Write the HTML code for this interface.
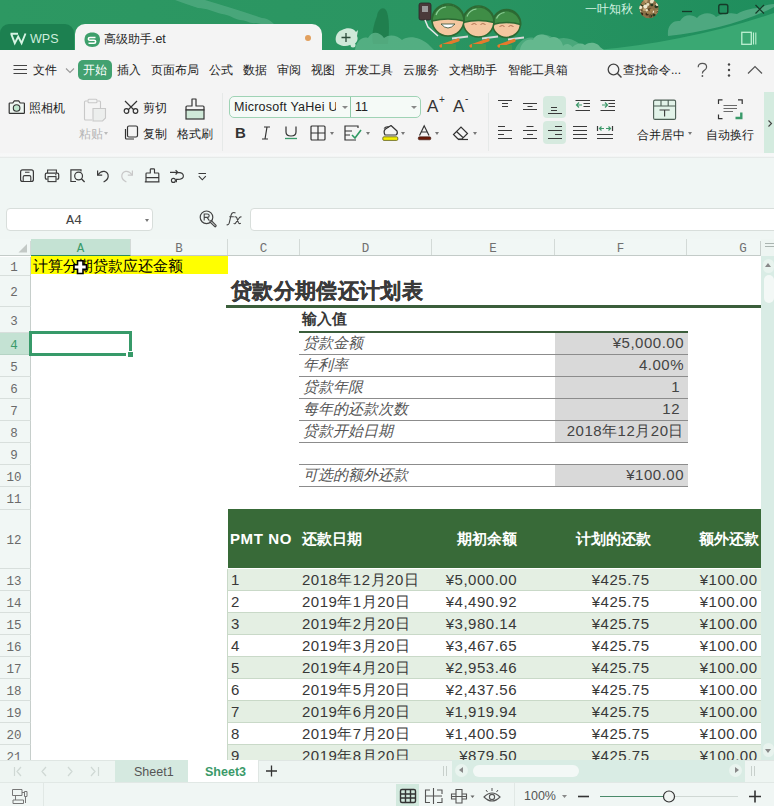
<!DOCTYPE html><html><head><meta charset="utf-8"><style>
*{box-sizing:border-box;margin:0;padding:0}
html,body{width:774px;height:806px;overflow:hidden;background:#fff}
body{position:relative;font-family:"Liberation Sans",sans-serif;color:#333;font-size:13px}
.a{position:absolute;white-space:nowrap}
svg{position:absolute;overflow:visible}
#title{left:0;top:0;width:774px;height:50px;background:#2d9460;overflow:hidden}
#menu{left:0;top:50px;width:774px;height:40px;background:#f4f4f4}
#ribbon{left:0;top:90px;width:774px;height:66px;background:#f4f4f4}
#qat{left:0;top:158px;width:774px;height:81px;background:#f0f6f4}
#colhdr{left:0;top:239px;width:761px;height:17px;background:#f1f7f5}
#grid{left:0;top:256px;width:761px;height:504px;background:#fff;overflow:hidden}
#vscroll{left:761px;top:239px;width:13px;height:521px;background:#d9ece5}
#tabs{left:0;top:760px;width:774px;height:22px;background:#eef5f2}
#status{left:0;top:782px;width:774px;height:24px;background:#f0f6f4}
.rh{position:absolute;left:0;width:31px;padding-right:2px;background:#f1f7f5;border-bottom:1px solid #d8dfdc;border-right:1px solid #c6cecb;font-family:"Liberation Mono",monospace;font-size:12.5px;color:#6a6a6a;text-align:center}
.ch{position:absolute;top:0;height:16px;border-right:1px solid #d3dad7;font-family:"Liberation Mono",monospace;font-size:12.5px;color:#707070;text-align:center;line-height:21px}
.t{position:absolute;white-space:nowrap;font-size:15px;color:#383838;line-height:22px;letter-spacing:0.5px}
.r{text-align:right}
</style></head><body>
<div id="title" class="a">
<svg width="774" height="50" style="left:0;top:0">
<defs><linearGradient id="tg" x1="0" x2="1" y1="0" y2="0"><stop offset="0" stop-color="#2d9862"/><stop offset="0.55" stop-color="#2a9562"/><stop offset="1" stop-color="#1f8e5d"/></linearGradient></defs><rect width="774" height="50" fill="url(#tg)"/>
<path d="M175 0 H205 C225 6 245 12 262 18 C268 18 272 22 276 26 C268 27 262 24 256 23 C250 24 246 20 240 20 C234 19 230 15 222 14 C214 12 206 8 198 8 C190 5 182 3 175 0 Z" fill="#56ad84" opacity="0.7"/>
<path d="M596 50 C655 45 715 33 774 13 V50 Z" fill="#3aa873"/>
<path d="M668 36 C667 26 672 20 680 21 C684 14 692 14 697 18 C702 12 712 12 716 17 C724 12 732 13 737 14 C745 9 755 8 760 8 C765 5 770 4 774 4 V7 C745 22 705 32 668 36 Z" fill="#5aae88" opacity="0.8"/>
<path d="M520 50 C521 43 527 38 533 40 C536 33 545 33 550 38 C556 35 562 40 563 46 C566 42 572 44 574 50 Z M570 50 C574 44 580 42 585 45 C590 41 598 43 600 47 L604 50 Z" fill="#74bf99" opacity="0.85"/>
</svg>
<div class="a" style="left:0px;top:24px;width:74px;height:26px;background:#1c8050;border-radius:9px 9px 0 0"></div>
<svg width="774" height="50" style="left:0;top:0"><path d="M10.5 33.8 H18 M11.2 33.8 L14.8 43.2 L18.2 36.5 L21.6 43.2 L25.5 33.5" stroke="#d6f4e4" stroke-width="1.9" fill="none" stroke-linejoin="miter"/></svg>
<div class="a" style="left:30px;top:31px;font-size:12.5px;color:#cdeedd;line-height:16px">WPS</div>
<div class="a" style="left:75px;top:24px;width:247px;height:26px;background:#f4f4f4;border-radius:10px 10px 0 0"></div>
<svg width="17" height="16" style="left:84px;top:31.5px"><path d="M8.2 0.5 C13 0.5 16 3 16 7.5 C16 12 13.5 15 8.2 15 C3 15 0.5 12 0.5 7.5 C0.5 3 3.5 0.5 8.2 0.5 Z" fill="#3d9f6b"/><path d="M11.5 5.5 H6 Q4.3 5.5 4.3 7 Q4.3 8.3 6 8.3 H10 Q11.7 8.3 11.7 9.8 Q11.7 11.3 10 11.3 H4.5" stroke="#fff" stroke-width="1.5" fill="none"/></svg>
<div class="a" style="left:104px;top:31px;font-size:12.4px;color:#2a2a2a;line-height:16px">高级助手.et</div>
<div class="a" style="left:305px;top:35px;width:6px;height:6px;border-radius:3px;background:#e2a05e"></div>
<svg width="26" height="22" style="left:334px;top:26px"><path d="M4 18 C0 16 1 6 8 4 C13 1 20 2 22 6 L24 4 L23 10 C25 14 22 19 16 19 C12 21 7 20 4 18Z" fill="#cfe9d9"/><circle cx="19" cy="19" r="2.5" fill="#cfe9d9"/><path d="M12 7 V16 M7.5 11.5 H16.5" stroke="#2c4a3a" stroke-width="1.3"/></svg>
<svg width="774" height="50" style="left:0;top:0"><path d="M373 44 C371 34 374 24 377 16 C378 9 384 5 387 12 C390 22 389 34 388 44 Z" fill="#1f7b4b" opacity="0.85"/><path d="M355 50 C356 42 362 36 368 38 C372 30 380 32 384 38 C390 33 398 36 402 40 C408 35 420 37 428 44 L434 50 Z" fill="#62b78d" opacity="0.75"/><path d="M515 50 C518 42 526 36 534 38 C540 32 550 34 556 40 C562 36 572 38 580 44 L584 50 Z" fill="#62b78d" opacity="0.6"/><rect x="419" y="3" width="12" height="17" rx="2" fill="#4a3a3a" stroke="#2a2a2a" stroke-width="0.8"/><rect x="422" y="6" width="6" height="6" fill="#9a9a9a"/><path d="M425 20 L428 27 L438 36" stroke="#e8e8e8" stroke-width="1.5" fill="none"/><circle cx="506.5" cy="23.5" r="14" fill="#f4c7a0" stroke="#2c6a33" stroke-width="1.6"/><path d="M492.5 24.5 A14 14 0 0 1 520.5 24.5 Q506.5 20.5 492.5 24.5 Z" fill="#3f8d46" stroke="#2c6a33" stroke-width="1.6"/><path d="M496.5 18.5 A10 10 0 0 1 504.5 12.5" stroke="#8fd09a" stroke-width="1.2" fill="none"/><path d="M499.5 26.5 Q502.5 24.5 504.5 26.5 M508.5 26.5 Q510.5 24.5 513.5 26.5" stroke="#b07050" stroke-width="1" fill="none"/><circle cx="478.5" cy="21.5" r="15.5" fill="#f4c7a0" stroke="#2c6a33" stroke-width="1.6"/><path d="M463 22.5 A15.5 15.5 0 0 1 494 22.5 Q478.5 18.5 463 22.5 Z" fill="#3f8d46" stroke="#2c6a33" stroke-width="1.6"/><path d="M467 16.5 A11.5 11.5 0 0 1 476.5 9" stroke="#8fd09a" stroke-width="1.2" fill="none"/><path d="M471.5 24.5 Q474.5 22.5 476.5 24.5 M480.5 24.5 Q482.5 22.5 485.5 24.5" stroke="#b07050" stroke-width="1" fill="none"/><circle cx="448" cy="20" r="16" fill="#f4c7a0" stroke="#2c6a33" stroke-width="1.6"/><path d="M432 21 A16 16 0 0 1 464 21 Q448 17 432 21 Z" fill="#3f8d46" stroke="#2c6a33" stroke-width="1.6"/><path d="M436 15 A12 12 0 0 1 446 7" stroke="#8fd09a" stroke-width="1.2" fill="none"/><path d="M441 24 Q448 32 455 24 Z" fill="#fff" stroke="#2c4a30" stroke-width="0.8"/><path d="M452 38.5 L468 36.5 M482 38.5 L498 36.5 M508 39.5 L524 37.5" stroke="#d8d8d8" stroke-width="1.8"/><path d="M441 46 L458 40 M471 46 L488 40 M499 46 L514 40.5" stroke="#e57a2c" stroke-width="3.2" stroke-linecap="round"/><path d="M442 50 V44 H456 V50 Z M472 50 V44 H486 V50 Z M500 50 V45 H512 V50 Z" fill="#3e9a52"/></svg>
<div class="a" style="left:585px;top:1px;font-size:12px;color:#d2f2e1;line-height:16px">一叶知秋</div>
<svg width="774" height="50" style="left:0;top:0"><defs><clipPath id="av"><circle cx="649" cy="8.6" r="9.6"/></clipPath></defs><g clip-path="url(#av)"><rect x="638" y="-2" width="22" height="22" fill="#8a7048"/><circle cx="644.3" cy="9.5" r="1.5" fill="#c0a070"/><circle cx="651.3" cy="1.1" r="1.0" fill="#c0a070"/><circle cx="644.7" cy="4.1" r="2.4" fill="#c0a070"/><circle cx="649.7" cy="9.6" r="1.6" fill="#3a2a18"/><circle cx="644.2" cy="2.7" r="2.3" fill="#2a3a20"/><circle cx="653.3" cy="11.7" r="1.1" fill="#f0ead0"/><circle cx="645.4" cy="0.5" r="2.2" fill="#c0a070"/><circle cx="650.7" cy="16.1" r="1.5" fill="#2a3a20"/><circle cx="647.1" cy="14.0" r="1.6" fill="#3a2a18"/><circle cx="642.4" cy="3.8" r="2.4" fill="#2a3a20"/><circle cx="654.0" cy="15.0" r="1.6" fill="#2a3a20"/><circle cx="650.3" cy="9.3" r="1.6" fill="#6a5030"/><circle cx="656.3" cy="11.9" r="2.3" fill="#a08050"/><circle cx="657.8" cy="11.7" r="1.2" fill="#e8e0c0"/><circle cx="650.2" cy="12.5" r="1.3" fill="#a08050"/><circle cx="645.1" cy="1.1" r="2.2" fill="#c0a070"/><circle cx="641.6" cy="14.0" r="1.6" fill="#3a2a18"/><circle cx="640.4" cy="7.5" r="1.6" fill="#d8c8a0"/><circle cx="640.8" cy="10.8" r="1.1" fill="#e8e0c0"/><circle cx="649.9" cy="16.1" r="1.4" fill="#6a5030"/><circle cx="641.4" cy="10.5" r="1.0" fill="#6a5030"/><circle cx="657.5" cy="5.1" r="1.4" fill="#f0ead0"/><circle cx="657.6" cy="5.9" r="1.5" fill="#3a2a18"/><circle cx="656.1" cy="6.6" r="1.6" fill="#2a3a20"/><circle cx="651.6" cy="10.4" r="1.8" fill="#a08050"/><circle cx="647.8" cy="12.6" r="1.3" fill="#a08050"/><circle cx="647.9" cy="4.5" r="1.4" fill="#e8e0c0"/><circle cx="640.2" cy="7.3" r="1.8" fill="#f0ead0"/><circle cx="646.8" cy="10.3" r="1.2" fill="#e8e0c0"/><circle cx="648.4" cy="11.9" r="1.5" fill="#a08050"/><circle cx="653.3" cy="0.4" r="1.1" fill="#f0ead0"/><circle cx="657.3" cy="4.4" r="1.6" fill="#e8e0c0"/><circle cx="643.2" cy="3.2" r="2.1" fill="#a08050"/><circle cx="645.4" cy="6.6" r="2.1" fill="#f0ead0"/><circle cx="657.5" cy="12.0" r="1.2" fill="#6a5030"/><circle cx="651.8" cy="4.7" r="1.5" fill="#2a3a20"/><circle cx="651.7" cy="1.7" r="1.8" fill="#e8e0c0"/></g></svg>
<svg width="90" height="20" style="left:680px;top:0">
<path d="M2 11.5 H12" stroke="#163a28" stroke-width="1.3"/>
<rect x="38.8" y="4.5" width="9" height="9" rx="1.8" stroke="#163a28" stroke-width="1.4" fill="none"/>
<path d="M75.5 5 L84 13.5 M84 5 L75.5 13.5" stroke="#163a28" stroke-width="1.2"/>
</svg>
<svg width="20" height="18" style="left:740px;top:30px"><rect x="1.8" y="2.3" width="9.5" height="12" stroke="#bdf0d2" stroke-width="1.3" fill="none"/><path d="M13.5 2.5 V14.5 M15.8 2.5 V14.5" stroke="#bdf0d2" stroke-width="1.1"/></svg>
</div>
<div id="menu" class="a"></div>
<svg width="18" height="12" style="left:12px;top:64px"><path d="M1.5 1.5 H15 M1.5 5.5 H15 M1.5 9.5 H15" stroke="#444" stroke-width="1.1"/></svg>
<div class="a" style="left:33px;top:62px;font-size:12px;color:#222;line-height:16px">文件</div>
<div class="a" style="left:117px;top:62px;font-size:12px;color:#222;line-height:16px">插入</div>
<div class="a" style="left:151px;top:62px;font-size:12px;color:#222;line-height:16px">页面布局</div>
<div class="a" style="left:209px;top:62px;font-size:12px;color:#222;line-height:16px">公式</div>
<div class="a" style="left:243px;top:62px;font-size:12px;color:#222;line-height:16px">数据</div>
<div class="a" style="left:277px;top:62px;font-size:12px;color:#222;line-height:16px">审阅</div>
<div class="a" style="left:311px;top:62px;font-size:12px;color:#222;line-height:16px">视图</div>
<div class="a" style="left:345px;top:62px;font-size:12px;color:#222;line-height:16px">开发工具</div>
<div class="a" style="left:403px;top:62px;font-size:12px;color:#222;line-height:16px">云服务</div>
<div class="a" style="left:449px;top:62px;font-size:12px;color:#222;line-height:16px">文档助手</div>
<div class="a" style="left:508px;top:62px;font-size:12px;color:#222;line-height:16px">智能工具箱</div>
<div class="a" style="left:623px;top:62px;font-size:12px;color:#222;line-height:16px">查找命令...</div>
<svg width="12" height="8" style="left:64.5px;top:67.5px"><path d="M1 0.5 L5 4.5 L9 0.5" stroke="#999" stroke-width="1.1" fill="none"/></svg>
<div class="a" style="left:78px;top:60px;width:34px;height:20px;background:#42a170;border-radius:5px"></div>
<div class="a" style="left:83px;top:62px;font-size:12px;color:#fff;line-height:16px">开始</div>
<svg width="18" height="18" style="left:606.5px;top:62.5px"><circle cx="6.5" cy="6.5" r="5.3" stroke="#444" stroke-width="1.3" fill="none"/><path d="M10.3 10.3 L14.5 14.5" stroke="#444" stroke-width="1.5"/></svg>
<svg width="774" height="90" style="left:0;top:0"><path d="M698.2 67.3 Q698.2 63.4 702.4 63.4 Q706.6 63.4 706.6 67.1 Q706.6 69.4 704 70.6 Q702.4 71.4 702.4 73.4" stroke="#555" stroke-width="1.2" fill="none"/><circle cx="702.4" cy="76" r="0.9" fill="#555"/></svg>
<svg width="6" height="16" style="left:726px;top:62px"><circle cx="3" cy="2.5" r="1.2" fill="#444"/><circle cx="3" cy="8" r="1.2" fill="#444"/><circle cx="3" cy="13.5" r="1.2" fill="#444"/></svg>
<svg width="18" height="10" style="left:746.5px;top:65px"><path d="M1 8.5 L8 1.5 L15 8.5" stroke="#555" stroke-width="1.2" fill="none"/></svg>
<div id="ribbon" class="a"></div>
<svg width="774" height="160" style="left:0;top:0"><path d="M9.2 103.6 Q9.2 103 9.8 103 H12.8 L14.3 100.9 H18.7 L20.2 103 H23.8 Q24.4 103 24.4 103.6 V112.8 Q24.4 113.4 23.8 113.4 H9.8 Q9.2 113.4 9.2 112.8 Z" stroke="#333" stroke-width="1.2" fill="#eef6f1" stroke-linejoin="round"/><circle cx="16.6" cy="108" r="3.3" stroke="#333" stroke-width="1.1" fill="#bfe6cf"/></svg>
<div class="a" style="left:29px;top:101px;font-size:12px;color:#222;line-height:14px">照相机</div>
<svg width="774" height="160" style="left:0;top:0"><path d="M87.5 101 H85.5 Q84.5 101 84.5 102 V119 Q84.5 120 85.5 120 H92" stroke="#c8c8c8" stroke-width="1.1" fill="none"/><path d="M97.5 101 H99.5 Q100.5 101 100.5 102 V108" stroke="#c8c8c8" stroke-width="1.1" fill="none"/><rect x="88" y="99.2" width="9" height="3.5" rx="1" stroke="#c8c8c8" stroke-width="1.1" fill="#f3f4f4"/><path d="M93 108.5 H105.5 V118 L102.5 121 H93 Z" stroke="#c8c8c8" stroke-width="1.1" fill="#eceeed"/></svg>
<div class="a" style="left:79px;top:127px;font-size:12px;color:#b5b5b5;line-height:14px">粘贴</div>
<div class="a" style="left:104px;top:132px;border-left:2.5px solid transparent;border-right:2.5px solid transparent;border-top:3px solid #bbb"></div>
<svg width="16" height="14" style="left:123px;top:100px"><path d="M2 1 L11 10 M14 1 L5 10" stroke="#333" stroke-width="1.2"/><circle cx="3.5" cy="11" r="2.3" stroke="#333" stroke-width="1.2" fill="none"/><circle cx="12.5" cy="11" r="2.3" stroke="#333" stroke-width="1.2" fill="none"/></svg>
<div class="a" style="left:143px;top:101px;font-size:12px;color:#222;line-height:14px">剪切</div>
<svg width="16" height="15" style="left:123px;top:125px"><rect x="4.5" y="1" width="10" height="11" rx="1.5" stroke="#333" stroke-width="1.2" fill="none"/><path d="M2.5 4 V13 Q2.5 14 3.5 14 H11" stroke="#333" stroke-width="1.2" fill="none"/></svg>
<div class="a" style="left:143px;top:127px;font-size:12px;color:#222;line-height:14px">复制</div>
<svg width="24" height="24" style="left:183px;top:97px"><path d="M9 2 H13 V9 H20 Q21 9 21 10 V13 H3 V10 Q3 9 4 9 H9 Z" stroke="#333" stroke-width="1.2" fill="none" stroke-linejoin="round"/><rect x="3" y="13" width="18" height="9" fill="#cfe9d8" stroke="#333" stroke-width="1.2"/></svg>
<div class="a" style="left:177px;top:127px;font-size:12px;color:#222;line-height:14px">格式刷</div>
<div class="a" style="left:222px;top:93px;width:1px;height:58px;background:#e6e9e8"></div>
<div class="a" style="left:229px;top:96px;width:192px;height:22px;border:1px solid #9fd3b5;border-radius:5px;background:#f5faf7"></div>
<div class="a" style="left:350px;top:97px;width:1px;height:20px;background:#8fc9a8"></div>
<div class="a" style="left:234px;top:100px;font-size:12.5px;color:#222;line-height:14px;letter-spacing:0.25px">Microsoft YaHei U</div>
<div class="a" style="left:336px;top:97px;width:14px;height:20px;background:#f5faf7"></div>
<div class="a" style="left:342px;top:106px;border-left:3px solid transparent;border-right:3px solid transparent;border-top:3px solid #888"></div>
<div class="a" style="left:355px;top:100px;font-size:12.5px;color:#222;line-height:14px">11</div>
<div class="a" style="left:411px;top:106px;border-left:3px solid transparent;border-right:3px solid transparent;border-top:3px solid #888"></div>
<div class="a" style="left:427px;top:98px;font-size:17px;color:#333;line-height:18px">A</div>
<div class="a" style="left:439px;top:95px;font-size:10px;color:#333;line-height:10px">+</div>
<div class="a" style="left:453px;top:98px;font-size:17px;color:#333;line-height:18px">A</div>
<div class="a" style="left:465px;top:94px;font-size:10px;color:#333;line-height:10px">-</div>
<div class="a" style="left:235px;top:124px;font-size:15px;font-weight:bold;color:#333;line-height:18px">B</div>
<svg width="10" height="14" style="left:261px;top:126px"><path d="M3 1 H9 M1 13 H7 M6 1 L4 13" stroke="#333" stroke-width="1.2"/></svg>
<svg width="14" height="16" style="left:284px;top:125px"><path d="M2 1.5 V7 Q2 11 7 11 Q12 11 12 7 V1.5" stroke="#333" stroke-width="1.2" fill="none"/><path d="M1 13.5 H13" stroke="#3a9a6a" stroke-width="1.3"/></svg>
<svg width="16" height="16" style="left:310px;top:125px"><rect x="1" y="1" width="14" height="14" rx="1" stroke="#333" stroke-width="1.2" fill="none"/><path d="M8 1 V15 M1 8 H15" stroke="#333" stroke-width="1.2"/></svg>
<div class="a" style="left:330px;top:132px;border-left:2.5px solid transparent;border-right:2.5px solid transparent;border-top:3px solid #777"></div>
<svg width="18" height="16" style="left:344px;top:125px"><path d="M14 3 V1 H1 V15 H12" stroke="#333" stroke-width="1.2" fill="none"/><path d="M1 6 H8 M1 10 H6" stroke="#333" stroke-width="1.1"/><path d="M8 10 L11 13 L17 5" stroke="#2f9a64" stroke-width="1.6" fill="none"/></svg>
<div class="a" style="left:366px;top:132px;border-left:2.5px solid transparent;border-right:2.5px solid transparent;border-top:3px solid #777"></div>
<svg width="774" height="160" style="left:0;top:0"><path d="M385 135 Q383 131 385.5 129 L391 125.5 L397 131 Q398 134 396 135 Z" stroke="#333" stroke-width="1.2" fill="none" stroke-linejoin="round"/><path d="M384 128.5 Q386 126 389 127" stroke="#333" stroke-width="1.1" fill="none"/><rect x="382.8" y="136.8" width="15" height="3.6" rx="1.2" fill="#f5f000" stroke="#5a5a20" stroke-width="0.8"/></svg>
<div class="a" style="left:401px;top:132px;border-left:2.5px solid transparent;border-right:2.5px solid transparent;border-top:3px solid #777"></div>
<svg width="774" height="160" style="left:0;top:0"><path d="M419.5 135.5 L424.2 125.8 L429 135.5 M421.2 132 H427.3" stroke="#333" stroke-width="1.2" fill="none"/><rect x="418.3" y="136.8" width="12.5" height="3" rx="1.2" fill="#6b1a08" stroke="#3a1a10" stroke-width="0.6"/></svg>
<div class="a" style="left:435px;top:132px;border-left:2.5px solid transparent;border-right:2.5px solid transparent;border-top:3px solid #777"></div>
<svg width="18" height="16" style="left:452px;top:125px"><path d="M6 14 L1.5 9.5 L9 2 L15.5 8.5 L10 14 Z M4.5 6.5 L11.5 13" stroke="#333" stroke-width="1.2" fill="none"/><path d="M6 14.5 H16" stroke="#333" stroke-width="1.2"/></svg>
<div class="a" style="left:473px;top:132px;border-left:2.5px solid transparent;border-right:2.5px solid transparent;border-top:3px solid #777"></div>
<div class="a" style="left:488px;top:93px;width:1px;height:58px;background:#e6e9e8"></div>
<div class="a" style="left:543px;top:95.5px;width:23px;height:22px;background:#d6eadf;border-radius:4px"></div>
<div class="a" style="left:543px;top:121px;width:23px;height:23px;background:#d6eadf;border-radius:4px"></div>
<svg width="774" height="160" style="left:0;top:0"><path d="M498 100.5 H512 M502 103.5 H508 M502 106.5 H508 M523 103.5 H537 M527.5 106.5 H532.5 M523 109.5 H537 M551 107.5 H557 M551 110.5 H557 M548 113.5 H562 M575.5 100.5 H590 M583.5 103.5 H590 M583.5 106.5 H590 M575.5 110.5 H590 M600.5 100.5 H615 M608.5 103.5 H615 M608.5 106.5 H615 M600.5 110.5 H615 M498 126.5 H505 M498 130.5 H512 M498 134.5 H504 M498 138.5 H512 M526.5 126.5 H533.5 M523 130.5 H537 M527 134.5 H533 M523 138.5 H537 M555 126.5 H562 M548 130.5 H562 M555 134.5 H562 M548 138.5 H562 M573 126.5 H587 M573 130.5 H587 M573 134.5 H587 M573 138.5 H587 M597 134.5 H613 M597 138.5 H613 M597.5 126 V131 M612.5 126 V131 " stroke="#3a3a3a" stroke-width="1.2" fill="none"/><path d="M582 105 H576.5 M579 102.5 L576.5 105 L579 107.5 M602 105 H607.5 M605 102.5 L607.5 105 L605 107.5 M599.5 128.5 H604 M601.5 126.5 L599.5 128.5 L601.5 130.5 M610.5 128.5 H606 M608.5 126.5 L610.5 128.5 L608.5 130.5 " stroke="#3f9a6c" stroke-width="1.2" fill="none"/></svg>
<svg width="774" height="160" style="left:0;top:0"><rect x="653.6" y="100.1" width="22" height="19.3" rx="1.5" stroke="#4d5f55" stroke-width="1.1" fill="#e2f3e9"/><path d="M653.6 106 H675.6 M661 100.1 V106 M668.2 100.1 V106" stroke="#4d5f55" stroke-width="1.1"/><path d="M659.5 110 H669.7 M664.6 110 V116.5" stroke="#3a3a3a" stroke-width="1.1"/></svg>
<div class="a" style="left:637px;top:128px;font-size:12px;color:#222;line-height:14px">合并居中</div>
<div class="a" style="left:688px;top:132px;border-left:2.5px solid transparent;border-right:2.5px solid transparent;border-top:3px solid #777"></div>
<svg width="774" height="160" style="left:0;top:0"><path d="M718.5 104 V99.8 H722.5 M738 99.8 H742.2 V104 M718.5 114.5 V118.7 H722.5" stroke="#333" stroke-width="1.2" fill="none"/><path d="M723.5 105.5 H737 M723.5 108.5 H737 M723.5 111.5 H733" stroke="#6a6a6a" stroke-width="1.1"/><path d="M741.3 112.5 V118 H735.5" stroke="#3a9a6a" stroke-width="2.4" fill="none"/></svg>
<div class="a" style="left:706px;top:128px;font-size:12px;color:#222;line-height:14px">自动换行</div>
<div class="a" style="left:764px;top:92px;width:10px;height:62px;background:#d4ebdf"></div>
<svg width="774" height="160" style="left:0;top:0"><path d="M768.5 120.5 L771.5 123.5 L768.5 126.5" stroke="#444" stroke-width="1.1" fill="none"/></svg>
<div class="a" style="left:0;top:153px;width:774px;height:7px;background:linear-gradient(#f6f7f7,#f7f8f8 45%,#e1e6e4 70%,#eef4f2 100%)"></div>
<div id="qat" class="a"></div>
<svg width="774" height="240" style="left:0;top:0"><rect x="20.6" y="169.9" width="12.8" height="11.6" rx="2" stroke="#3a3a3a" stroke-width="1.2" fill="none"/><path d="M25 172.2 H29.5 M23.2 181.5 V177 Q23.2 175.6 24.6 175.6 H29.4 Q30.8 175.6 30.8 177 V181.5" stroke="#3a3a3a" stroke-width="1.1" fill="none"/><path d="M47.6 173 V170 H56.4 V173" stroke="#3a3a3a" stroke-width="1.1" fill="none"/><path d="M47.5 179.2 H46.6 Q45.3 179.2 45.3 177.9 V174.4 Q45.3 173.1 46.6 173.1 H57.4 Q58.7 173.1 58.7 174.4 V177.9 Q58.7 179.2 57.4 179.2 H56.5" stroke="#3a3a3a" stroke-width="1.2" fill="none"/><rect x="48" y="176.6" width="8" height="5" stroke="#3a3a3a" stroke-width="1.1" fill="none"/><path d="M55 174.8 H56.5" stroke="#3a3a3a" stroke-width="1"/><path d="M76 181.5 H70.9 V169.9 H81 V171.5" stroke="#3a3a3a" stroke-width="1.2" fill="none"/><circle cx="78.6" cy="176" r="3.9" stroke="#3a3a3a" stroke-width="1.2" fill="none"/><path d="M81.4 178.8 L84.6 182" stroke="#3a3a3a" stroke-width="1.3"/><path d="M97.6 170.6 V175.2 H102.2" stroke="#3a3a3a" stroke-width="1.2" fill="none"/><path d="M97.8 175 Q100.8 170.8 104.3 171.4 Q108.3 172.4 108.2 176.4 Q108 179.8 103.6 182" stroke="#3a3a3a" stroke-width="1.2" fill="none"/><path d="M132.4 170.6 V175.2 H127.8" stroke="#c8c8c8" stroke-width="1.2" fill="none"/><path d="M132.2 175 Q129.2 170.8 125.7 171.4 Q121.7 172.4 121.8 176.4 Q122 179.8 126.4 182" stroke="#c8c8c8" stroke-width="1.2" fill="none"/><path d="M150.3 173 V169.6 Q150.3 168.8 151.1 168.8 H153.7 Q154.5 168.8 154.5 169.6 V173 H158 Q158.8 173 158.8 173.8 V181.8 H146 V173.8 Q146 173 146.8 173 Z M146 177.6 H158.8 M144.8 181.8 H159.5" stroke="#3a3a3a" stroke-width="1.15" fill="none" stroke-linejoin="round"/><path d="M170 172.3 H177.8 M175.6 170.1 L177.8 172.3 L175.6 174.5 M176.5 172.3 H177.3 Q183.4 172.3 183.4 176 Q183.4 179.4 177.4 179.4 H176.4 V182.3" stroke="#3a3a3a" stroke-width="1.15" fill="none"/><circle cx="173.4" cy="180.4" r="2" stroke="#3a3a3a" stroke-width="1.1" fill="none"/><path d="M198.5 173.5 H206 M198.8 176.2 L202.3 179.8 L205.8 176.2" stroke="#3a3a3a" stroke-width="1.15" fill="none"/></svg>
<div class="a" style="left:6px;top:208px;width:147px;height:23px;background:#fff;border:1px solid #d8dedb;border-radius:4px"></div>
<div class="a" style="left:66px;top:212px;font-family:Liberation Mono,monospace;font-size:13.5px;color:#444;line-height:17px">A4</div>
<div class="a" style="left:145px;top:219px;border-left:2.5px solid transparent;border-right:2.5px solid transparent;border-top:3px solid #777"></div>
<svg width="774" height="240" style="left:0;top:0"><circle cx="206.5" cy="217.3" r="6.3" stroke="#444" stroke-width="1.2" fill="none"/><path d="M204.2 220.6 V214 H207.3 Q209.2 214 209.2 215.7 Q209.2 217.4 207.3 217.4 H204.2 M207 217.4 L209.4 220.6" stroke="#444" stroke-width="1.1" fill="none"/><path d="M211 221.6 L215.2 225.8" stroke="#444" stroke-width="3" stroke-linecap="round"/><path d="M211.3 221.9 L214.9 225.5" stroke="#eef4f2" stroke-width="1" stroke-linecap="round"/>
<path d="M235.5 213.2 Q234 211.8 232.3 213 Q231.3 213.8 231 215.5 L229.2 223.2 Q228.6 225.2 226.6 224.8 M229.3 216.8 H233.8" stroke="#444" stroke-width="1.1" fill="none"/>
<path d="M234.5 217 Q236 216.3 236.8 217.8 L238.3 222.4 Q239 224.3 240.8 223.2 M241.5 217 Q240 216.5 238.8 218.5 L236 222.5 Q235 224.4 233.6 223.4" stroke="#444" stroke-width="1.1" fill="none"/></svg>
<div class="a" style="left:250px;top:208px;width:530px;height:23px;background:#fff;border:1px solid #d8dedb;border-radius:4px"></div>
<div id="colhdr" class="a">
<div class="a" style="left:0;top:16px;width:761px;height:1px;background:#c3cbc8"></div>
<svg width="30" height="17" style="left:0;top:0"><path d="M27 5 V13.5 H18.5 Z" fill="#c3c9c6"/></svg>
<div class="a" style="left:30px;top:2px;width:1px;height:15px;background:#d3dad7"></div>
<div class="ch" style="left:31px;width:100px;background:#c4e2d3;color:#3a9a6a;border-bottom:1px solid #2f8a5e;height:17px;">A</div>
<div class="ch" style="left:131px;width:97px;">B</div>
<div class="ch" style="left:228px;width:72px;">C</div>
<div class="ch" style="left:300px;width:132px;">D</div>
<div class="ch" style="left:432px;width:123px;">E</div>
<div class="ch" style="left:555px;width:132px;">F</div>
<div class="ch" style="left:687px;width:113px;">G</div>
</div>
<div id="grid" class="a">
<div class="rh" style="top:1px;height:19px;line-height:23px;">1</div>
<div class="rh" style="top:20px;height:31px;line-height:35px;">2</div>
<div class="rh" style="top:51px;height:26px;line-height:30px;">3</div>
<div class="rh" style="top:77px;height:22px;line-height:26px;background:#c4e2d3;color:#3a9a6a;border-bottom-color:#b5d3c4;">4</div>
<div class="rh" style="top:99px;height:22px;line-height:26px;">5</div>
<div class="rh" style="top:121px;height:22px;line-height:26px;">6</div>
<div class="rh" style="top:143px;height:22px;line-height:26px;">7</div>
<div class="rh" style="top:165px;height:22px;line-height:26px;">8</div>
<div class="rh" style="top:187px;height:22px;line-height:26px;">9</div>
<div class="rh" style="top:209px;height:22px;line-height:26px;">10</div>
<div class="rh" style="top:231px;height:23px;line-height:27px;">11</div>
<div class="rh" style="top:254px;height:59px;line-height:63px;">12</div>
<div class="rh" style="top:313px;height:22px;line-height:26px;">13</div>
<div class="rh" style="top:335px;height:22px;line-height:26px;">14</div>
<div class="rh" style="top:357px;height:22px;line-height:26px;">15</div>
<div class="rh" style="top:379px;height:22px;line-height:26px;">16</div>
<div class="rh" style="top:401px;height:22px;line-height:26px;">17</div>
<div class="rh" style="top:423px;height:22px;line-height:26px;">18</div>
<div class="rh" style="top:445px;height:22px;line-height:26px;">19</div>
<div class="rh" style="top:467px;height:22px;line-height:26px;">20</div>
<div class="rh" style="top:489px;height:22px;line-height:26px;">21</div>
<div class="a" style="left:31px;top:0;width:197px;height:18px;background:#ffff00"></div>
<div class="t" style="left:33px;top:0px;font-size:15px;color:#000;line-height:20px;letter-spacing:0">计算分期贷款应还金额</div>
<svg width="774" height="60" style="left:0;top:0"><path d="M77.5 4.8 H83 V8.8 H86.5 V13.2 H83 V17.5 H77.5 V13.2 H74 V8.8 H77.5 Z" fill="#fff" stroke="#000" stroke-width="1.6"/></svg>
<div class="t" style="left:231px;top:21px;font-size:21.4px;font-weight:bold;color:#3a3a3a;line-height:28px;letter-spacing:0.35px;-webkit-text-stroke:0.3px #3a3a3a">贷款分期偿还计划表</div>
<div class="a" style="left:226px;top:49px;width:535px;height:3px;background:#3b5e3b"></div>
<div class="t" style="left:302px;top:52px;font-weight:bold;font-size:15px;letter-spacing:0">输入值</div>
<div class="a" style="left:299px;top:75px;width:389px;height:2px;background:#3b5e3b"></div>
<div class="a" style="left:555px;top:77px;width:133px;height:21px;background:#d9d9d9"></div>
<div class="a" style="left:299px;top:98px;width:389px;height:1px;background:#8c8c8c"></div>
<div class="t" style="left:303px;top:76px;font-style:italic;color:#555;font-size:15px;letter-spacing:0">贷款金额</div>
<div class="t r" style="right:77px;top:76px;color:#444">¥5,000.00</div>
<div class="a" style="left:555px;top:99px;width:133px;height:21px;background:#d9d9d9"></div>
<div class="a" style="left:299px;top:120px;width:389px;height:1px;background:#8c8c8c"></div>
<div class="t" style="left:303px;top:98px;font-style:italic;color:#555;font-size:15px;letter-spacing:0">年利率</div>
<div class="t r" style="right:77px;top:98px;color:#444">4.00%</div>
<div class="a" style="left:555px;top:121px;width:133px;height:21px;background:#d9d9d9"></div>
<div class="a" style="left:299px;top:142px;width:389px;height:1px;background:#8c8c8c"></div>
<div class="t" style="left:303px;top:120px;font-style:italic;color:#555;font-size:15px;letter-spacing:0">贷款年限</div>
<div class="t r" style="right:81px;top:120px;color:#444">1</div>
<div class="a" style="left:555px;top:143px;width:133px;height:21px;background:#d9d9d9"></div>
<div class="a" style="left:299px;top:164px;width:389px;height:1px;background:#8c8c8c"></div>
<div class="t" style="left:303px;top:142px;font-style:italic;color:#555;font-size:15px;letter-spacing:0">每年的还款次数</div>
<div class="t r" style="right:81px;top:142px;color:#444">12</div>
<div class="a" style="left:555px;top:165px;width:133px;height:21px;background:#d9d9d9"></div>
<div class="a" style="left:299px;top:186px;width:389px;height:1px;background:#8c8c8c"></div>
<div class="t" style="left:303px;top:164px;font-style:italic;color:#555;font-size:15px;letter-spacing:0">贷款开始日期</div>
<div class="t r" style="right:77px;top:164px;color:#444">2018年12月20日</div>
<div class="a" style="left:555px;top:209px;width:133px;height:21px;background:#d9d9d9"></div>
<div class="a" style="left:299px;top:230px;width:389px;height:1px;background:#8c8c8c"></div>
<div class="a" style="left:299px;top:208px;width:389px;height:1px;background:#8c8c8c"></div>
<div class="t" style="left:303px;top:208px;font-style:italic;color:#555;font-size:15px;letter-spacing:0">可选的额外还款</div>
<div class="t r" style="right:77px;top:208px;color:#444">¥100.00</div>
<div class="a" style="left:228px;top:253px;width:533px;height:59px;background:#386a38"></div>
<div class="t" style="left:230px;top:272px;font-weight:bold;color:#fff;font-size:15px;letter-spacing:0.6px">PMT NO</div>
<div class="t" style="left:302px;top:272px;font-weight:bold;color:#fff;font-size:15.3px;letter-spacing:0">还款日期</div>
<div class="t r" style="right:244px;top:272px;font-weight:bold;color:#fff;font-size:15.3px;letter-spacing:0">期初余额</div>
<div class="t r" style="right:110.5px;top:272px;font-weight:bold;color:#fff;font-size:15.3px;letter-spacing:0">计划的还款</div>
<div class="t r" style="right:2px;top:272px;font-weight:bold;color:#fff;font-size:15.3px;letter-spacing:0">额外还款</div>
<div class="a" style="left:227px;top:313px;width:534px;height:22px;background:#e4efe3;border-bottom:1px solid #c9d9c8;border-left:1px solid #c9d9c8"></div>
<div class="t" style="left:231px;top:313px;">1</div>
<div class="t" style="left:302px;top:313px;">2018年12月20日</div>
<div class="t r" style="right:244px;top:313px;">¥5,000.00</div>
<div class="t r" style="right:111.5px;top:313px;">¥425.75</div>
<div class="t r" style="right:3.5px;top:313px;">¥100.00</div>
<div class="a" style="left:227px;top:335px;width:534px;height:22px;background:#ffffff;border-bottom:1px solid #c9d9c8;border-left:1px solid #c9d9c8"></div>
<div class="t" style="left:231px;top:335px;">2</div>
<div class="t" style="left:302px;top:335px;">2019年1月20日</div>
<div class="t r" style="right:244px;top:335px;">¥4,490.92</div>
<div class="t r" style="right:111.5px;top:335px;">¥425.75</div>
<div class="t r" style="right:3.5px;top:335px;">¥100.00</div>
<div class="a" style="left:227px;top:357px;width:534px;height:22px;background:#e4efe3;border-bottom:1px solid #c9d9c8;border-left:1px solid #c9d9c8"></div>
<div class="t" style="left:231px;top:357px;">3</div>
<div class="t" style="left:302px;top:357px;">2019年2月20日</div>
<div class="t r" style="right:244px;top:357px;">¥3,980.14</div>
<div class="t r" style="right:111.5px;top:357px;">¥425.75</div>
<div class="t r" style="right:3.5px;top:357px;">¥100.00</div>
<div class="a" style="left:227px;top:379px;width:534px;height:22px;background:#ffffff;border-bottom:1px solid #c9d9c8;border-left:1px solid #c9d9c8"></div>
<div class="t" style="left:231px;top:379px;">4</div>
<div class="t" style="left:302px;top:379px;">2019年3月20日</div>
<div class="t r" style="right:244px;top:379px;">¥3,467.65</div>
<div class="t r" style="right:111.5px;top:379px;">¥425.75</div>
<div class="t r" style="right:3.5px;top:379px;">¥100.00</div>
<div class="a" style="left:227px;top:401px;width:534px;height:22px;background:#e4efe3;border-bottom:1px solid #c9d9c8;border-left:1px solid #c9d9c8"></div>
<div class="t" style="left:231px;top:401px;">5</div>
<div class="t" style="left:302px;top:401px;">2019年4月20日</div>
<div class="t r" style="right:244px;top:401px;">¥2,953.46</div>
<div class="t r" style="right:111.5px;top:401px;">¥425.75</div>
<div class="t r" style="right:3.5px;top:401px;">¥100.00</div>
<div class="a" style="left:227px;top:423px;width:534px;height:22px;background:#ffffff;border-bottom:1px solid #c9d9c8;border-left:1px solid #c9d9c8"></div>
<div class="t" style="left:231px;top:423px;">6</div>
<div class="t" style="left:302px;top:423px;">2019年5月20日</div>
<div class="t r" style="right:244px;top:423px;">¥2,437.56</div>
<div class="t r" style="right:111.5px;top:423px;">¥425.75</div>
<div class="t r" style="right:3.5px;top:423px;">¥100.00</div>
<div class="a" style="left:227px;top:445px;width:534px;height:22px;background:#e4efe3;border-bottom:1px solid #c9d9c8;border-left:1px solid #c9d9c8"></div>
<div class="t" style="left:231px;top:445px;">7</div>
<div class="t" style="left:302px;top:445px;">2019年6月20日</div>
<div class="t r" style="right:244px;top:445px;">¥1,919.94</div>
<div class="t r" style="right:111.5px;top:445px;">¥425.75</div>
<div class="t r" style="right:3.5px;top:445px;">¥100.00</div>
<div class="a" style="left:227px;top:467px;width:534px;height:22px;background:#ffffff;border-bottom:1px solid #c9d9c8;border-left:1px solid #c9d9c8"></div>
<div class="t" style="left:231px;top:467px;">8</div>
<div class="t" style="left:302px;top:467px;">2019年7月20日</div>
<div class="t r" style="right:244px;top:467px;">¥1,400.59</div>
<div class="t r" style="right:111.5px;top:467px;">¥425.75</div>
<div class="t r" style="right:3.5px;top:467px;">¥100.00</div>
<div class="a" style="left:227px;top:489px;width:534px;height:22px;background:#e4efe3;border-bottom:1px solid #c9d9c8;border-left:1px solid #c9d9c8"></div>
<div class="t" style="left:231px;top:489px;">9</div>
<div class="t" style="left:302px;top:489px;">2019年8月20日</div>
<div class="t r" style="right:244px;top:489px;">¥879.50</div>
<div class="t r" style="right:111.5px;top:489px;">¥425.75</div>
<div class="t r" style="right:3.5px;top:489px;">¥100.00</div>
<div class="a" style="left:29px;top:75px;width:103px;height:25px;border:3px solid #379a69"></div>
<div class="a" style="left:126px;top:95px;width:8px;height:7px;background:#fff"></div>
<div class="a" style="left:128px;top:96px;width:5px;height:5px;background:#379a69"></div>
</div>
<div id="vscroll" class="a"></div>
<div class="a" style="left:761px;top:239px;width:13px;height:17px;background:#eef5f2"></div>
<div class="a" style="left:760px;top:241px;width:1px;height:15px;background:#c8cfcc"></div>
<svg width="13" height="8" style="left:762px;top:241px"><path d="M3 2.5 H12 M3 5.5 H12" stroke="#aab4b0" stroke-width="1"/></svg>
<div class="a" style="left:763px;top:259px;width:11px;height:14px;border-radius:6px;background:#e8f3ee"></div>
<div class="a" style="left:765px;top:263px;border-left:3px solid transparent;border-right:3px solid transparent;border-bottom:4px solid #888"></div>
<div class="a" style="left:764px;top:275px;width:10px;height:28px;border-radius:5px;background:#f3f8f6"></div>
<div class="a" style="left:763px;top:743px;width:11px;height:14px;border-radius:6px;background:#e8f3ee"></div>
<div class="a" style="left:765px;top:749px;border-left:3px solid transparent;border-right:3px solid transparent;border-top:4px solid #888"></div>
<div id="tabs" class="a"></div>
<div class="a" style="left:0;top:760px;width:774px;height:1px;background:#dfe6e3"></div>
<svg width="120" height="800" style="left:0;top:0"><path d="M14.5 767 V776 M21 767 L17 771.5 L21 776 M46 767 L42 771.5 L46 776 M68 767 L72 771.5 L68 776 M91 767 L95 771.5 L91 776 M98.5 767 V776" stroke="#cfd8d4" stroke-width="1.2" fill="none"/></svg>
<div class="a" style="left:115px;top:760px;width:73px;height:22px;background:#d5e9e0"></div>
<div class="a" style="left:134px;top:764px;font-size:12.5px;color:#555;line-height:16px">Sheet1</div>
<div class="a" style="left:188px;top:760px;width:71px;height:22px;background:#fff;border-right:1px solid #dfe6e3"></div>
<div class="a" style="left:205px;top:764px;font-size:12.5px;font-weight:bold;color:#3b9a69;line-height:16px">Sheet3</div>
<svg width="16" height="14" style="left:264px;top:764px"><path d="M7.5 1.5 V12.5 M2 7 H13" stroke="#333" stroke-width="1.3"/></svg>
<div class="a" style="left:452px;top:760px;width:293px;height:22px;background:#d9ece4"></div>
<svg width="774" height="800" style="left:0;top:0"><path d="M443.5 766 V776 M446.5 766 V776 M751.5 766 V776 M754.5 766 V776" stroke="#c8d0cc" stroke-width="1"/></svg>
<div class="a" style="left:455px;top:764px;width:13px;height:13px;border-radius:7px;background:#e9f4ef"></div>
<div class="a" style="left:459px;top:767px;border-top:3px solid transparent;border-bottom:3px solid transparent;border-right:4px solid #888"></div>
<div class="a" style="left:473px;top:765px;width:106px;height:12px;border-radius:6px;background:#f3f8f6"></div>
<div class="a" style="left:729px;top:764px;width:13px;height:13px;border-radius:7px;background:#e9f4ef"></div>
<div class="a" style="left:735px;top:767px;border-top:3px solid transparent;border-bottom:3px solid transparent;border-left:4px solid #888"></div>
<div id="status" class="a"></div>
<div class="a" style="left:0;top:782px;width:774px;height:1px;background:#e1e8e5"></div>
<div class="a" style="left:43px;top:783px;width:1px;height:23px;background:#e1e8e5"></div>
<div class="a" style="left:514px;top:783px;width:1px;height:23px;background:#e1e8e5"></div>
<div class="a" style="left:396px;top:784px;width:23px;height:22px;background:#d2e9de"></div>
<svg width="774" height="806" style="left:0;top:0"><path d="M12.5 789.5 H22 V795.5 H12.5 Z M15.5 795.5 V800 M13 800 H23.5 V803.5 H13 Z M22 792.5 H24.5 M24.5 791.5 H27 V796.5 H24.5 Z M25.5 796.5 V803" stroke="#777" stroke-width="1" fill="none"/><rect x="400.5" y="789.5" width="15" height="13" rx="1.5" stroke="#333" stroke-width="1.4" fill="none"/><path d="M400.5 794 H415.5 M400.5 798 H415.5 M405.5 789.5 V802.5 M410.5 789.5 V802.5" stroke="#333" stroke-width="1.4"/><path d="M430 790 H425.5 V802.5 H430 M437 790 H442 V794 M442 798 V802.5 H437 M433.5 788 V804 M426 796 H442" stroke="#555" stroke-width="1.1" fill="none"/><path d="M456 789.5 H462 V794 H466.5 V799 H462 V803 H456 V799 H451.5 V794 H456 Z M456 794 V799 M462 794 V799 M451.5 796.5 H466.5" stroke="#555" stroke-width="1.1" fill="none"/><path d="M470.5 795.5 L472.5 798 L474.5 795.5Z" fill="#666"/><path d="M484 797 Q492 789 500 797 Q492 805 484 797 Z" stroke="#555" stroke-width="1.1" fill="none"/><circle cx="492" cy="797" r="2.6" stroke="#555" stroke-width="1.1" fill="none"/><path d="M492 788 V791 M486 790 L487.5 792 M498 790 L496.5 792" stroke="#555" stroke-width="1"/><path d="M562 795 L564.5 798 L567 795Z" fill="#888"/><path d="M578 796.5 H589" stroke="#333" stroke-width="1.6"/><path d="M600 796.5 H663" stroke="#4a8a6a" stroke-width="1.2"/><path d="M675 796.5 H738" stroke="#d0d8d4" stroke-width="1"/><circle cx="669" cy="796.5" r="5.5" stroke="#333" stroke-width="1.2" fill="#f0f4f2"/><path d="M749 796.5 H761 M755 790.5 V802.5" stroke="#333" stroke-width="1.6"/></svg>
<div class="a" style="left:524px;top:788px;font-size:12.5px;color:#555;line-height:16px">100%</div>
</body></html>
